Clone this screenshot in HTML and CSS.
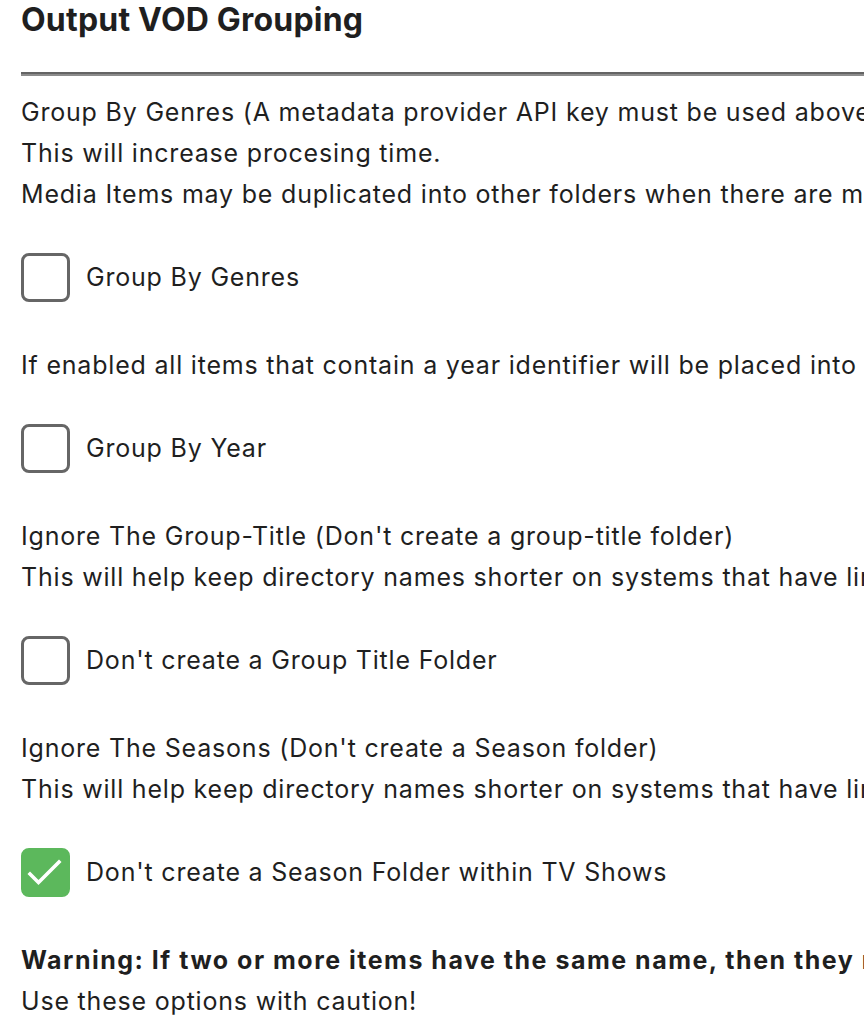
FILE: index.html
```html
<!DOCTYPE html>
<html>
<head>
<meta charset="utf-8">
<link rel="stylesheet" href="styles.css">
</head>
<body>
<div class="page">
  <h2 class="title">Output VOD Grouping</h2>
  <hr class="rule">
  <p class="desc">Group By Genres (A metadata provider API key must be used above. This will enable genre lookup.)<br>This will increase procesing time.<br>Media Items may be duplicated into other folders when there are multiple genres.</p>
  <label class="check-row"><span class="box"></span><span class="label">Group By Genres</span></label>
  <p class="desc">If enabled all items that contain a year identifier will be placed into a year folder.</p>
  <label class="check-row"><span class="box"></span><span class="label">Group By Year</span></label>
  <p class="desc">Ignore The Group-Title (Don't create a group-title folder)<br>This will help keep directory names shorter on systems that have limited path lengths.</p>
  <label class="check-row"><span class="box"></span><span class="label">Don't create a Group Title Folder</span></label>
  <p class="desc">Ignore The Seasons (Don't create a Season folder)<br>This will help keep directory names shorter on systems that have limited path lengths.</p>
  <label class="check-row"><span class="box checked"><svg viewBox="0 0 49 49" width="49" height="49"><path d="M9 26 L17.5 34.5 L38 14" fill="none" stroke="#fff" stroke-width="3.6" stroke-linecap="square"/></svg></span><span class="label">Don't create a Season Folder within TV Shows</span></label>
  <p class="desc"><strong>Warning: If two or more items have the same name, then they may overwrite each other.</strong><br>Use these options with caution!</p>
</div>
</body>
</html>
```
FILE: styles.css
```css
html, body {
  margin: 0;
  padding: 0;
  background: #fff;
  overflow: hidden;
}
.page {
  padding-left: 21px;
  width: 1600px;
  font-family: Inter, "Noto Sans", sans-serif;
  color: #1f1f1f;
  font-size: 25px;
  letter-spacing: 0.8px;
  line-height: 41px;
  white-space: nowrap;
}
.title {
  margin: 0;
  font-size: 32px;
  font-weight: 700;
  letter-spacing: 0.2px;
  line-height: 40px;
}
.rule {
  margin: 32px 0 16px 0;
  border: 0;
  border-top: 2px solid #646464;
  border-bottom: 2px solid #8c8c8c;
  height: 0;
}
.desc {
  margin: 0;
}
.desc strong {
  font-weight: 700;
  letter-spacing: 1.5px;
}
.check-row {
  display: flex;
  align-items: center;
  gap: 16px;
  margin: 38px 0 43px 0;
  height: 49px;
}
.box {
  position: relative;
  box-sizing: border-box;
  width: 49px;
  height: 49px;
  border: 3px solid #666;
  border-radius: 8px;
  flex: none;
}
.box.checked {
  background: #5cb85c;
  border-color: #5cb85c;
}
.box.checked svg {
  position: absolute;
  left: -3px;
  top: -3px;
  display: block;
}
.label {
  line-height: 41px;
}
```
